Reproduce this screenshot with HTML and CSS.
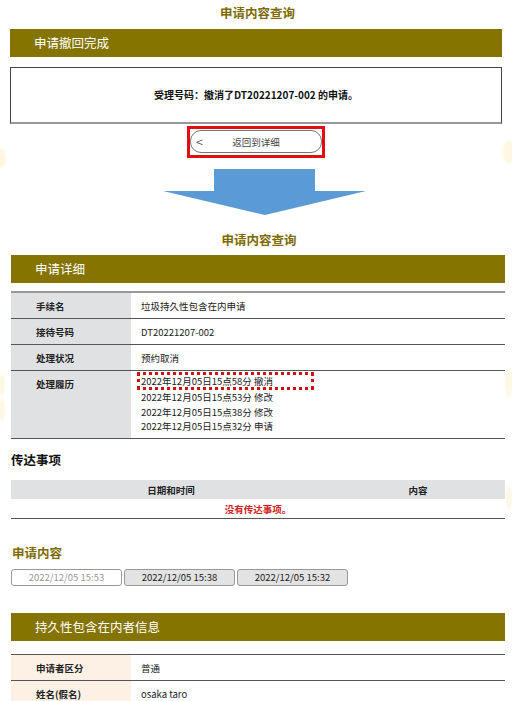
FILE: index.html
```html
<!DOCTYPE html>
<html lang="zh-CN">
<head>
    <meta charset="UTF-8">
    <meta name="viewport" content="width=device-width, initial-scale=1.0">
    <title>申请内容查询</title>
    <link rel="stylesheet" href="styles.css">
</head>
<body>
<div class="page">

    <h1 class="page-title">申请内容查询</h1>
    <div class="bar">申请撤回完成</div>
    <div class="notice">受理号码：撤消了DT20221207-002 的申请。</div>

    <div class="back-wrap">
        <div class="highlight">
            <a href="#" class="back-btn"><span class="chev">&lt;</span>返回到详细</a>
        </div>
    </div>

    <div class="arrow">
        <svg width="203" height="46" viewBox="0 0 203 46">
            <polygon points="51,0 152,0 152,22 203,22 102,46 0,22 51,22" fill="#5b9bd5"/>
        </svg>
    </div>

    <h1 class="page-title second">申请内容查询</h1>
    <div class="bar wide">申请详细</div>

    <table class="detail">
        <tr><th>手续名</th><td>垃圾持久性包含在内申请</td></tr>
        <tr><th>接待号码</th><td>DT20221207-002</td></tr>
        <tr><th>处理状况</th><td>预约取消</td></tr>
        <tr class="history">
            <th>处理履历</th>
            <td>
                <div class="hist-line marked">2022年12月05日15点58分 撤消</div>
                <div class="hist-line">2022年12月05日15点53分 修改</div>
                <div class="hist-line">2022年12月05日15点38分 修改</div>
                <div class="hist-line">2022年12月05日15点32分 申请</div>
            </td>
        </tr>
    </table>

    <h2 class="section">传达事项</h2>
    <table class="notes">
        <tr><th class="col-date">日期和时间</th><th>内容</th></tr>
        <tr><td colspan="2" class="empty">没有传达事项。</td></tr>
    </table>

    <h2 class="section olive">申请内容</h2>
    <div class="versions">
        <span class="ver current">2022/12/05 15:53</span>
        <span class="ver">2022/12/05 15:38</span>
        <span class="ver">2022/12/05 15:32</span>
    </div>

    <div class="bar wide person">持久性包含在内者信息</div>
    <table class="detail peach">
        <tr><th>申请者区分</th><td>普通</td></tr>
        <tr><th>姓名(假名)</th><td>osaka taro</td></tr>
    </table>

</div>
</body>
</html>
```

FILE: styles.css
```css
/* Core styles */
body {
    margin: 0;
    font-family: "Noto Sans CJK SC", "Noto Sans", sans-serif;
    color: #222;
    background-color: #fff;
    background-image:
        radial-gradient(ellipse 8px 14px at 509px 152px, #fdf6e0 60%, transparent 100%),
        radial-gradient(ellipse 6px 12px at 1px 158px, #fdf6e0 60%, transparent 100%),
        radial-gradient(ellipse 5px 18px at 509px 383px, #fdf8e6 60%, transparent 100%),
        radial-gradient(ellipse 4px 14px at 2px 385px, #fdf8e6 60%, transparent 100%),
        radial-gradient(ellipse 4px 14px at 2px 410px, #fdf8e6 60%, transparent 100%),
        radial-gradient(ellipse 4px 14px at 509px 498px, #fdf8e6 60%, transparent 100%);
    background-repeat: no-repeat;
}

.page {
    padding: 0 7px 0 10px;
}

.page-title {
    margin: 0 0 3px;
    height: 26px;
    line-height: 26px;
    font-size: 12.5px;
    font-weight: bold;
    color: #7d6b00;
    text-align: center;
}

.page-title.second {
    margin-top: 12px;
    margin-bottom: 2px;
    padding-left: 3px;
}

.bar {
    height: 28px;
    line-height: 28px;
    background-color: #857400;
    color: #fff;
    font-size: 12.5px;
    padding-left: 24px;
    margin-right: 3px;
}

.bar.wide {
    margin-left: 1px;
    margin-right: 0;
}

.notice {
    margin: 10px 3px 0 0;
    height: 54px;
    line-height: 54px;
    border: 1px solid #444;
    border-bottom: 2px solid #999;
    text-align: center;
    font-size: 10px;
    font-weight: bold;
    color: #111;
}

/* back button */
.back-wrap {
    display: flex;
    justify-content: center;
    margin-top: 2px;
    padding-right: 3px;
}

.highlight {
    border: 3px solid #e01010;
    padding: 1px 0 2px;
}

.back-btn {
    display: flex;
    align-items: center;
    justify-content: center;
    position: relative;
    width: 130px;
    height: 21px;
    border: 1px solid #777;
    border-radius: 11px;
    font-size: 9.5px;
    color: #444;
    text-decoration: none;
}

.chev {
    position: absolute;
    left: 5px;
    top: 1px;
    font-size: 13px;
    font-weight: 300;
    color: #333;
}

.arrow {
    margin: 11px 0 0 153px;
    height: 46px;
}

.arrow svg {
    display: block;
}

/* detail tables */
table {
    border-collapse: collapse;
    width: 494px;
    margin-left: 1px;
    font-size: 9.5px;
}

.detail {
    margin-top: 8px;
    border-top: 2px solid #999;
}

.detail th {
    width: 95px;
    background-color: #e0e1e3;
    text-align: left;
    padding: 0 0 0 25px;
    height: 25px;
    font-weight: bold;
    color: #222;
    border-bottom: 1px solid #555;
    vertical-align: middle;
}

.detail td {
    padding: 0 0 0 10px;
    height: 25px;
    color: #222;
    border-bottom: 1px solid #555;
}

.detail .history th {
    vertical-align: top;
    padding-top: 6px;
    height: 61px;
}

.detail .history td {
    vertical-align: top;
    padding-top: 4px;
    padding-bottom: 4px;
}

.hist-line {
    line-height: 14.7px;
    font-size: 9.5px;
}

.hist-line.marked {
    width: 166px;
    margin-left: -4px;
    padding: 0 4px 0 1px;
    border: 3px dotted #d01010;
    line-height: 12px;
    margin-top: -3px;
}

.section {
    margin: 11px 0 0 1px;
    font-size: 12.5px;
    line-height: 20px;
    font-weight: bold;
    color: #111;
}

.section.olive {
    margin-top: 24px;
    color: #7d6b00;
    margin-left: 2px;
}

.notes {
    margin-top: 10px;
}

.notes th {
    background-color: #e0e1e3;
    height: 19px;
    padding: 0;
    font-weight: bold;
    color: #222;
}

.notes .col-date {
    width: 320px;
}

.empty {
    height: 19px;
    text-align: center;
    color: #d02020;
    font-weight: bold;
    border-bottom: 1px solid #555;
    padding: 0;
}

/* version buttons */
.versions {
    display: flex;
    gap: 2px;
    margin: 6px 0 0 1px;
}

.ver {
    width: 109px;
    height: 15px;
    line-height: 15px;
    border: 1px solid #999;
    border-radius: 3px;
    background-color: #e3e3e3;
    text-align: center;
    font-size: 9.5px;
    color: #222;
}

.ver.current {
    background-color: #fff;
    color: #999;
}

.person {
    margin-top: 27px;
}

.peach {
    margin-top: 13px;
    border-top: 1px solid #555;
}

.peach th {
    background-color: #fdf1e6;
}
```
